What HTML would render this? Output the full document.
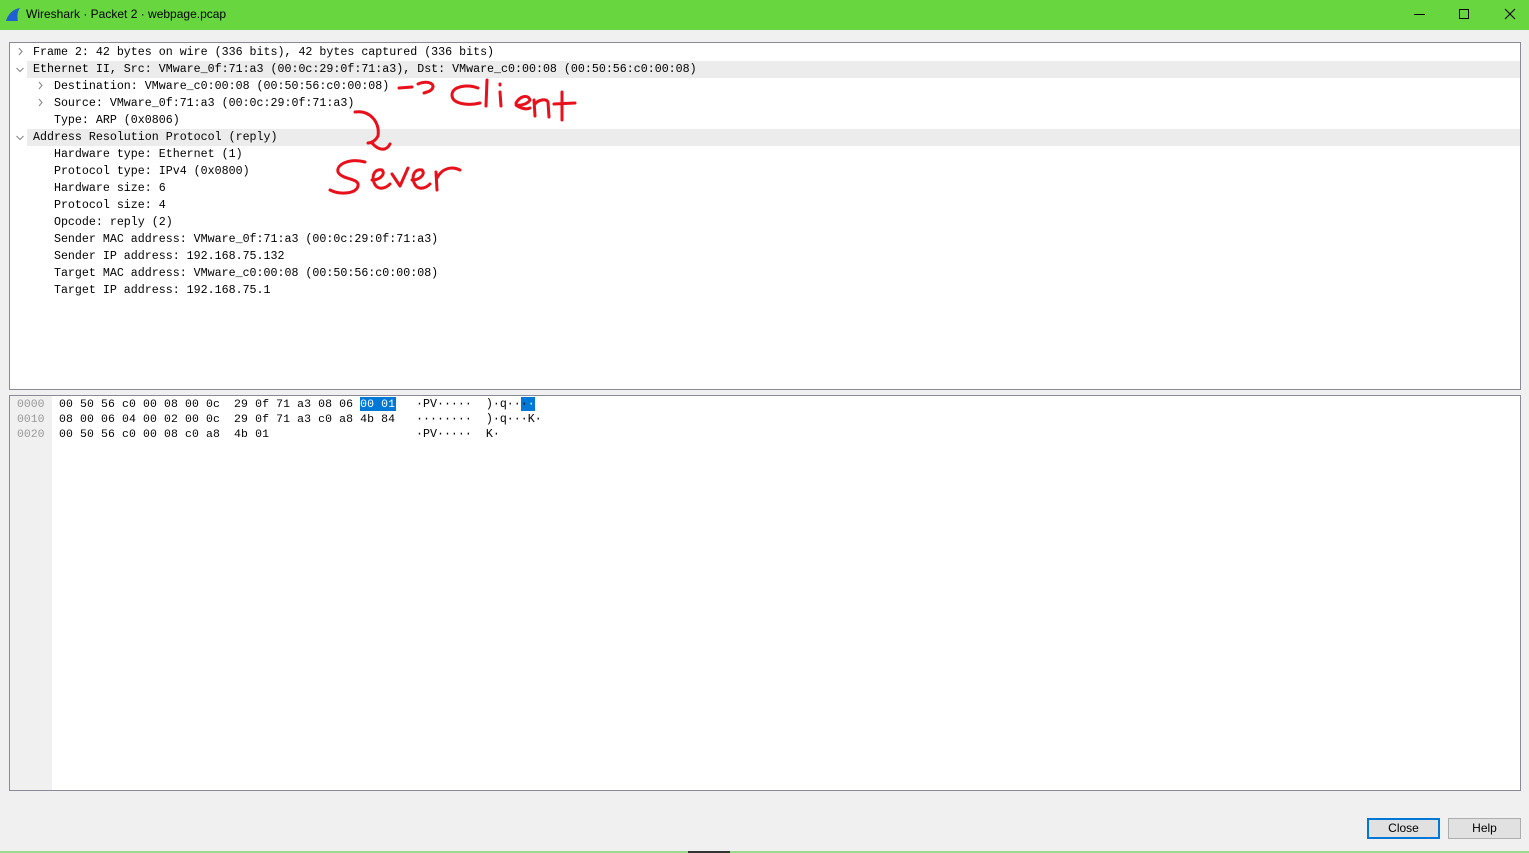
<!DOCTYPE html>
<html><head><meta charset="utf-8"><style>
*{margin:0;padding:0;box-sizing:border-box}
body{width:1529px;height:853px;background:#f0f0f0;position:relative;overflow:hidden;font-family:"Liberation Sans",sans-serif}
.title{position:absolute;left:0;top:0;width:1529px;height:30px;background:#67d63f}
.title span{position:absolute;left:26px;top:7px;font-size:12px;color:#000}
.p{position:absolute;background:#fff;border:1px solid #8a8a96}
.m{font-family:"Liberation Mono",monospace;font-size:11.65px;white-space:pre;position:absolute;color:#000}
.row{position:absolute;left:17px;right:0;height:17px}
.hl{background:#ececec}
.btn{position:absolute;top:818px;height:21px;font-size:12px;text-align:center;line-height:19px;background:#e1e1e1;border:1px solid #adadad}
</style></head><body>
<div class="title">
<svg style="position:absolute;left:5px;top:7px" width="16" height="15"><path d="M1 14 C3 7 8 2 15 1 C12 5 12 10 13 14 Z" fill="#1f5fd0"/></svg>
<span>Wireshark · Packet 2 · webpage.pcap</span>
<div style="position:absolute;left:1414px;top:14px;width:11px;height:1px;background:#000"></div>
<div style="position:absolute;left:1459px;top:9px;width:10px;height:10px;border:1px solid #000"></div>
<svg style="position:absolute;left:1504px;top:8px" width="12" height="12"><path d="M1 1L11 11M11 1L1 11" stroke="#000" stroke-width="1.1"/></svg>
</div>

<div class="p" style="left:9px;top:42px;width:1512px;height:348px">
<div class="row hl" style="top:18px"></div>
<div class="row hl" style="top:86px"></div>
<svg style="position:absolute;left:5px;top:5px" width="40" height="110" fill="none" stroke="#888" stroke-width="1.1">
<path d="M4 0L7 3.5L4 7"/><path d="M1.5 20L5 23.5L8.5 20"/><path d="M24 34L27 37.5L24 41"/><path d="M24 51L27 54.5L24 58"/><path d="M1.5 88L5 91.5L8.5 88"/>
</svg>
</div>
<div class="m" style="left:33px;top:44px;line-height:17px">Frame 2: 42 bytes on wire (336 bits), 42 bytes captured (336 bits)
Ethernet II, Src: VMware_0f:71:a3 (00:0c:29:0f:71:a3), Dst: VMware_c0:00:08 (00:50:56:c0:00:08)
   Destination: VMware_c0:00:08 (00:50:56:c0:00:08)
   Source: VMware_0f:71:a3 (00:0c:29:0f:71:a3)
   Type: ARP (0x0806)
Address Resolution Protocol (reply)
   Hardware type: Ethernet (1)
   Protocol type: IPv4 (0x0800)
   Hardware size: 6
   Protocol size: 4
   Opcode: reply (2)
   Sender MAC address: VMware_0f:71:a3 (00:0c:29:0f:71:a3)
   Sender IP address: 192.168.75.132
   Target MAC address: VMware_c0:00:08 (00:50:56:c0:00:08)
   Target IP address: 192.168.75.1</div>

<svg style="position:absolute;left:0;top:0" width="1529" height="853" fill="none" stroke="#e8101a" stroke-width="3" stroke-linecap="round" stroke-linejoin="round">
<path d="M399 88 L412 87"/><path d="M418 84 C428 80 436 84 432 89 C430 92 426 92 424 93"/>
<path d="M478 88 C468 84 452 86 452 95 C452 104 468 106 480 103"/>
<path d="M487 80 L486 106"/>
<path d="M500 92 L501 106"/><path d="M500 84 L500 85"/>
<path d="M516 103 C520 96 528 94 530 100 C528 104 520 106 516 105 C520 108 526 110 530 108"/>
<path d="M534 100 L535 116 M535 104 C538 100 546 98 548 102 L549 117"/>
<path d="M562 92 L562 120 M554 104 L575 103"/>
<path d="M355 112 C370 110 380 122 378 136 C376 140 372 143 368 143 M372 143 C378 150 386 152 390 144"/>
<path d="M365 162 C350 158 336 164 338 172 C342 180 360 178 358 186 C356 194 340 195 330 190"/>
<path d="M372 180 C380 180 386 174 382 170 C374 168 370 178 376 186 C380 190 386 188 390 184"/>
<path d="M392 174 L400 186 L408 168"/>
<path d="M412 180 C420 180 426 174 422 170 C414 168 410 178 416 186 C420 190 426 188 430 184"/>
<path d="M436 172 L437 190 M437 178 C442 168 452 166 460 170"/>
</svg>

<div class="p" style="left:9px;top:395px;width:1512px;height:396px">
<div style="position:absolute;left:0;top:0;width:42px;height:394px;background:#f0f0f0"></div>
</div>
<div style="position:absolute;left:360px;top:397px;width:36px;height:14px;background:#0078d7"></div>
<div style="position:absolute;left:521px;top:397px;width:14px;height:14px;background:#0078d7"></div>
<div class="m" style="left:17px;top:397px;line-height:15px;color:#999;font-size:11.47px">0000
0010
0020</div>
<div class="m" style="left:59px;top:397px;line-height:15px;font-size:11.47px;letter-spacing:0.12px">00 50 56 c0 00 08 00 0c  29 0f 71 a3 08 06 <span style="color:#fff">00 01</span>
08 00 06 04 00 02 00 0c  29 0f 71 a3 c0 a8 4b 84
00 50 56 c0 00 08 c0 a8  4b 01</div>
<div class="m" style="left:416px;top:397px;line-height:15px;font-size:11.65px">·PV·····  )·q···<span style="color:#fff">··</span>
········  )·q···K·
·PV·····  K·</div>

<div class="btn" style="left:1367px;width:73px;border:2px solid #0078d7;line-height:17px">Close</div>
<div class="btn" style="left:1448px;width:73px">Help</div>
<div style="position:absolute;left:0;top:851px;width:1529px;height:2px;background:#9ad88a"></div>
<div style="position:absolute;left:688px;top:851px;width:42px;height:2px;background:#333"></div>
</body></html>
